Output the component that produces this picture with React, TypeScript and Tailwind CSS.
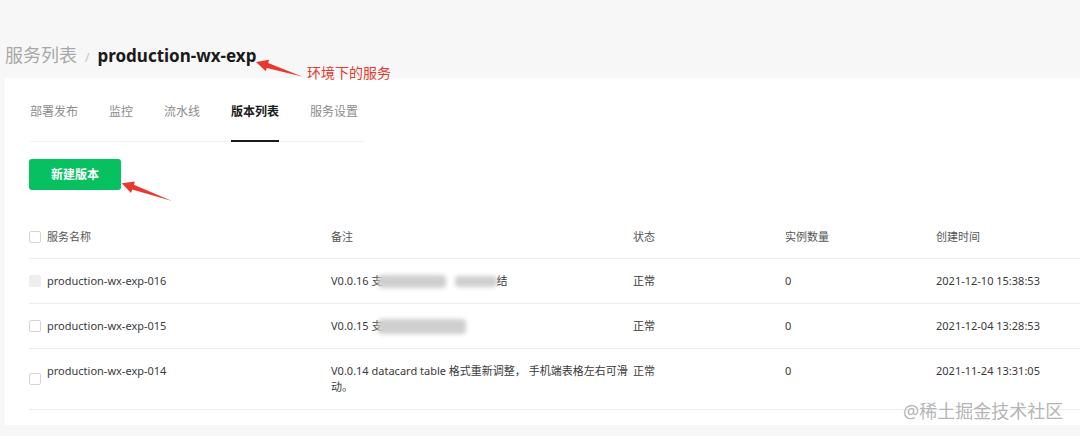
import React from 'react';

const tabs = ['部署发布', '监控', '流水线', '版本列表', '服务设置'];

type Row = {
  name: string;
  remark: React.ReactNode;
  status: string;
  count: string;
  created: string;
  disabled?: boolean;
};

const Blur = ({ w, h }: { w: number; h: number }) => (
  <span
    className="inline-block align-middle bg-[#cfcfcf] blur-[2px] rounded-sm"
    style={{ width: w, height: h }}
  />
);

const rows: Row[] = [
  {
    name: 'production-wx-exp-016',
    remark: (
      <span className="flex items-center">
        <span>V0.0.16 支</span>
        <span className="-ml-[5px] flex items-center gap-[9px]">
          <Blur w={68} h={13} />
          <Blur w={42} h={11} />
        </span>
        <span>结</span>
      </span>
    ),
    status: '正常',
    count: '0',
    created: '2021-12-10 15:38:53',
    disabled: true,
  },
  {
    name: 'production-wx-exp-015',
    remark: (
      <span className="flex items-center">
        <span>V0.0.15 支</span>
        <span className="-ml-[5px] flex items-center">
          <Blur w={88} h={15} />
        </span>
      </span>
    ),
    status: '正常',
    count: '0',
    created: '2021-12-04 13:28:53',
  },
  {
    name: 'production-wx-exp-014',
    remark: 'V0.0.14 datacard table 格式重新调整， 手机端表格左右可滑动。',
    status: '正常',
    count: '0',
    created: '2021-11-24 13:31:05',
  },
];

const Checkbox = ({ disabled }: { disabled?: boolean }) => (
  <span
    className={`w-[12px] h-[12px] rounded-[2px] shrink-0 border ${
      disabled ? 'bg-[#eeeeee] border-[#eeeeee]' : 'bg-white border-[#d4d4d4]'
    }`}
  />
);

const App: React.FC = () => {
  return (
    <div className="relative w-[1080px] h-[436px] overflow-hidden bg-[#f7f7f7] font-['Noto_Sans','Noto_Sans_CJK_SC',sans-serif]">
      {/* breadcrumb */}
      <div className="h-[78px] pl-[5px] pt-[43px] flex items-baseline">
        <span className="text-[18px] leading-[24px] text-[#a8a8a8]">服务列表</span>
        <span className="mx-[8px] text-[12px] text-[#c4c4c4]">/</span>
        <span className="text-[17px] leading-[24px] font-bold text-[#1a1a1a]">production-wx-exp</span>
      </div>

      {/* card */}
      <div className="ml-[5px] h-[347px] bg-white pl-[24px]">
        <div className="ml-[1px] w-fit flex gap-[31px] border-b border-[#f2f2f2] pr-[7px]">
          {tabs.map((t) => {
            const active = t === '版本列表';
            return (
              <div
                key={t}
                className={`pt-[25px] pb-[19px] text-[12px] leading-[18px] border-b-2 -mb-px ${
                  active ? 'border-[#1a1a1a] text-[#1a1a1a] font-bold' : 'border-transparent text-[#8c8c8c]'
                }`}
              >
                {t}
              </div>
            );
          })}
        </div>

        <button className="mt-[17px] w-[92px] h-[31px] rounded-[3px] bg-[#07c160] text-white text-[12px] font-bold">
          新建版本
        </button>

        {/* table */}
        <div className="mt-[26px] text-[11px] leading-[16px]">
          <div className="grid grid-cols-[302px_302px_152px_151px_1fr] h-[43px] items-center border-b border-[#ececec] text-[#555555]">
            <div className="flex items-center gap-[6px]">
              <Checkbox />
              <span>服务名称</span>
            </div>
            <div>备注</div>
            <div>状态</div>
            <div>实例数量</div>
            <div>创建时间</div>
          </div>
          {rows.map((r) => (
            <div
              key={r.name}
              className="grid grid-cols-[302px_302px_152px_151px_1fr] border-b border-[#ececec] text-[#3a3a3a]"
            >
              <div className="flex items-center gap-[6px] py-[14px]">
                <Checkbox disabled={r.disabled} />
                <span className="self-start">{r.name}</span>
              </div>
              <div className="py-[14px] pr-[2px]">{r.remark}</div>
              <div className="py-[14px]">{r.status}</div>
              <div className="py-[14px]">{r.count}</div>
              <div className="py-[14px]">{r.created}</div>
            </div>
          ))}
        </div>
      </div>

      {/* annotations */}
      <svg className="absolute inset-0 pointer-events-none" width="1080" height="436" viewBox="0 0 1080 436">
        <polygon
          points="256,62 269.2,59.8 268.2,63.1 302,76.5 266.8,67.9 265.8,71.2"
          fill="#e8392e"
        />
        <polygon
          points="121.7,183.3 135,181.5 133.8,184.8 172,201 132.2,189.6 131,192.9"
          fill="#e8392e"
        />
      </svg>
      <span className="absolute left-[903px] top-[63px] hidden" />
      <span className="absolute left-[307px] top-[63px] text-[14px] leading-[19px] text-[#e8392e]">
        环境下的服务
      </span>
      <span className="absolute left-[903px] top-[399px] text-[18px] leading-[24px] text-[#b5b5b5] [text-shadow:0_0_2px_#ffffff]">
        @稀土掘金技术社区
      </span>
    </div>
  );
};

export default App;
